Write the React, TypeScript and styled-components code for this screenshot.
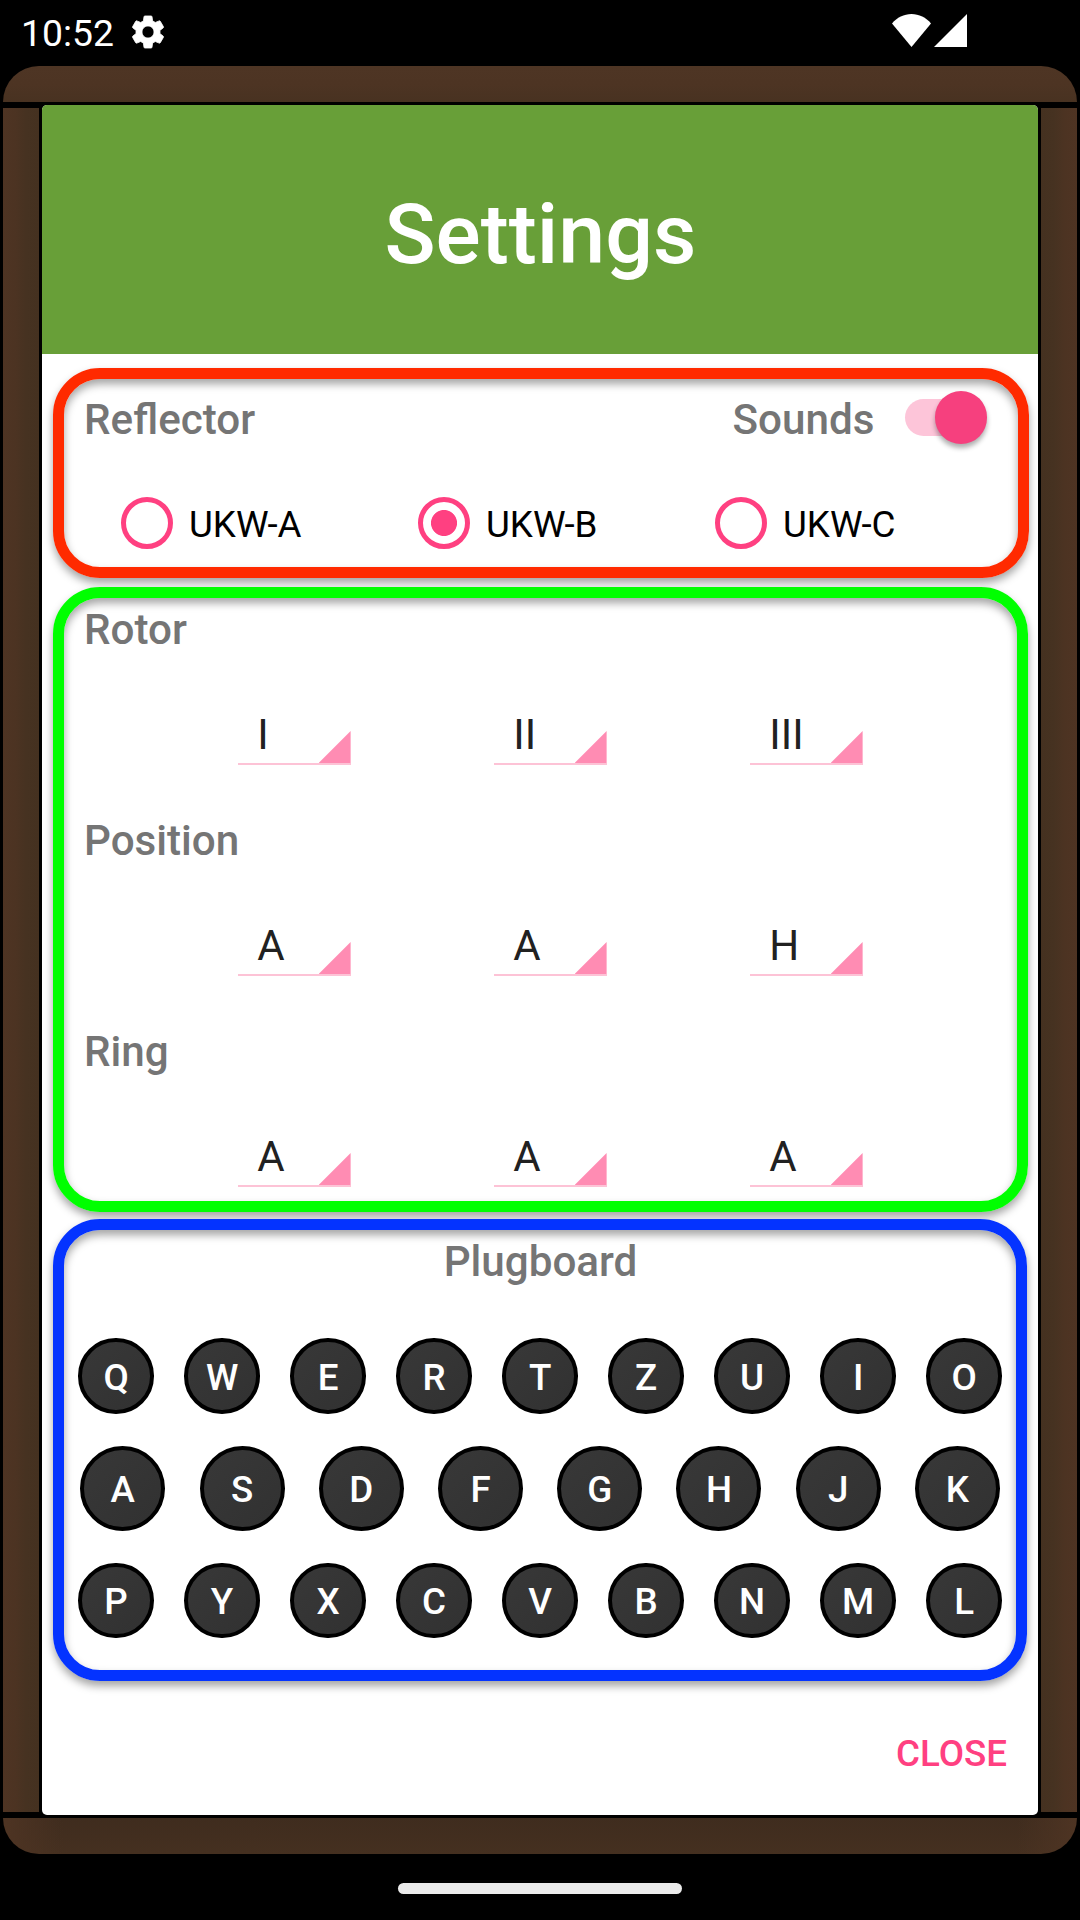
import React, { useState } from "react";
import styled, { createGlobalStyle } from "styled-components";

const GlobalStyle = createGlobalStyle`
  html, body { margin: 0; padding: 0; background: #000; }
  *, *::before, *::after { box-sizing: border-box; }
  button { font: inherit; border: 0; padding: 0; background: none; }
`;

const Screen = styled.div`
  display: flex;
  flex-direction: column;
  width: 1080px;
  height: 1920px;
  overflow: hidden;
  background: #000;
  font-family: Roboto, "Noto Sans", sans-serif;
`;

const StatusBar = styled.header`
  display: flex;
  align-items: flex-start;
  justify-content: space-between;
  height: 66px;
  padding: 0 113px 0 21px;
  color: #fff;
`;

const StatusGroup = styled.div<{ $gap: number; $top: number }>`
  display: flex;
  align-items: flex-start;
  gap: ${(p) => p.$gap}px;
  padding-top: ${(p) => p.$top}px;
  svg { display: block; fill: #fff; }
`;

const Clock = styled.span`
  width: 93px;
  font-size: 37.3px;
  line-height: 41px;
`;

const Gear = styled.svg`
  margin-top: -1px;
  stroke: #fff;
  stroke-width: 0.5;
`;

const Cabinet = styled.div`
  display: flex;
  flex-direction: column;
  height: 1788px;
  padding: 0 3px;
`;

const Rail = styled.div<{ $bottom?: boolean }>`
  height: 36px;
  flex: none;
  border-radius: ${(p) => (p.$bottom ? "0 0 38px 38px" : "38px 38px 0 0")};
  background: ${(p) =>
    p.$bottom
      ? "linear-gradient(90deg, #4e3423 0, rgba(78,52,35,0) 60px, rgba(78,52,35,0) 1014px, #4e3423 1074px), linear-gradient(#3f2c1e, #453020)"
      : "linear-gradient(#4e3524 0, #4d3423 50%, #483221 100%)"};
`;

const Middle = styled.div`
  display: flex;
  flex: 1;
  margin: 3px 0;
`;

const Post = styled.div<{ $right?: boolean }>`
  width: 36px;
  margin: 3px 0;
  background: linear-gradient(${(p) => (p.$right ? 270 : 90)}deg, #4f3423 0, #4c3322 35%, #463221 65%, #453120 100%);
`;

const Dialog = styled.main`
  display: flex;
  flex-direction: column;
  flex: 1;
  margin: 0 3px;
  border-radius: 5px;
  overflow: hidden;
  background: #fff;
`;

const Banner = styled.div`
  display: flex;
  align-items: center;
  justify-content: center;
  height: 249px;
  padding: 10px 0 0 1px;
  background: #689f38;
`;

const BannerTitle = styled.h1`
  margin: 0;
  color: #fff;
  font-size: 84.3px;
  font-weight: 500;
  line-height: 100px;
`;

const Panels = styled.div`
  display: flex;
  flex-direction: column;
  padding: 14px 9px 0 11px;
`;

const Panel = styled.section<{ $color: string; $height: number; $gap: number; $inset: number }>`
  display: flex;
  flex-direction: column;
  height: ${(p) => p.$height}px;
  margin: 0 ${(p) => p.$inset}px ${(p) => p.$gap}px 0;
  border: 11px solid ${(p) => p.$color};
  border-radius: 47px;
  box-shadow: 0 5px 8px rgba(0, 0, 0, 0.36), inset 0 5px 8px rgba(0, 0, 0, 0.36);
`;

const TitleRow = styled.div`
  display: flex;
  justify-content: space-between;
  padding: 16px 31px 0 20px;
`;

const Label = styled.h2`
  margin: 0;
  color: #757575;
  font-size: 42.2px;
  font-weight: 500;
  line-height: 50px;
`;

const SwitchField = styled.label`
  display: flex;
  gap: 30.5px;
`;

const Track = styled.span`
  display: flex;
  justify-content: flex-end;
  align-items: center;
  width: 71px;
  height: 37px;
  margin: 4px 11px 0 0;
  border-radius: 19px;
  background: #fdc5d9;
`;

const Thumb = styled.span`
  flex: none;
  width: 52.5px;
  height: 52.5px;
  margin-right: -11px;
  border-radius: 50%;
  background: #f6407e;
  box-shadow: 0 4px 5px rgba(0, 0, 0, 0.32);
`;

const RadioRow = styled.div`
  display: grid;
  grid-template-columns: repeat(3, 297px);
  padding: 52px 0 0 57px;
`;

const RadioOption = styled.button`
  display: flex;
  align-items: center;
  gap: 16px;
  height: 52px;
  color: #000;
  font-size: 36.75px;
  line-height: 44px;
`;

const RadioText = styled.span`
  padding-top: 4px;
`;

const Ring = styled.span<{ $on: boolean }>`
  width: 52px;
  height: 52px;
  border: 5px solid #ff4081;
  border-radius: 50%;
  background: ${(p) => (p.$on ? "radial-gradient(circle, #ff4081 12.6px, transparent 13.4px)" : "none")};
`;

const RotorGroup = styled.div`
  flex: none;
  height: 211px;
  padding: 7px 0 0 20px;
`;

const SpinnerRow = styled.div`
  display: grid;
  grid-template-columns: repeat(3, 256px);
  padding: 53px 0 0 154px;
`;

const Spinner = styled.button`
  display: flex;
  justify-content: space-between;
  align-items: flex-end;
  width: 112.6px;
  height: 57px;
  padding-left: 19.3px;
  border-bottom: 2px solid #fdc3d6;
  color: #212121;
  font-size: 42px;
  line-height: 56px;
`;

const Corner = styled.i`
  width: 32px;
  height: 32px;
  background: #ff8cb3;
  clip-path: polygon(100% 0, 100% 100%, 0 100%);
`;

const PlugTitle = styled(Label)`
  padding: 7px 0 0 1px;
  text-align: center;
`;

const Keyboard = styled.div`
  display: flex;
  flex-direction: column;
  gap: 32px;
  padding: 51.3px 14px 0 14.3px;
`;

const KeyRow = styled.div<{ $wide?: boolean }>`
  display: flex;
  justify-content: space-between;
  padding: 0 ${(p) => (p.$wide ? 2 : 0)}px;
`;

const Key = styled.button<{ $size: number }>`
  width: ${(p) => p.$size}px;
  height: ${(p) => p.$size}px;
  padding-top: 3.5px;
  border: 4px solid #000;
  border-radius: 50%;
  background: linear-gradient(135deg, #383838, #313131);
  color: #fff;
  font-size: 36.75px;
  font-weight: 500;
  line-height: 40px;
`;

const Actions = styled.div`
  display: flex;
  justify-content: flex-end;
  padding: 51px 31px 0;
`;

const CloseButton = styled.button`
  color: #ff4081;
  font-size: 36.75px;
  font-weight: 500;
  line-height: 44px;
`;

const NavBar = styled.footer`
  display: flex;
  justify-content: center;
  padding-top: 29px;
`;

const Pill = styled.div`
  width: 284px;
  height: 11px;
  border-radius: 6px;
  background: #ebebeb;
`;

const reflectors = ["UKW-A", "UKW-B", "UKW-C"];
const groups = [
  { name: "Rotor", values: ["I", "II", "III"] },
  { name: "Position", values: ["A", "A", "H"] },
  { name: "Ring", values: ["A", "A", "A"] },
];
const keyRows = [
  { keys: "QWERTZUIO", size: 75.6 },
  { keys: "ASDFGHJK", size: 85 },
  { keys: "PYXCVBNML", size: 75.6 },
];

export default function App() {
  const [reflector, setReflector] = useState("UKW-B");

  return (
    <Screen>
      <GlobalStyle />
      <StatusBar>
        <StatusGroup $gap={14} $top={13}>
          <Clock>10:52</Clock>
          <Gear width="40" height="40" viewBox="0 0 24 24">
            <path d="M19.14 12.94c.04-.3.06-.61.06-.94 0-.32-.02-.64-.07-.94l2.03-1.58c.18-.14.23-.41.12-.61l-1.92-3.32c-.12-.22-.37-.29-.59-.22l-2.39.96c-.5-.38-1.03-.7-1.62-.94l-.36-2.54c-.04-.24-.24-.41-.48-.41h-3.84c-.24 0-.43.17-.47.41l-.36 2.54c-.59.24-1.13.57-1.62.94l-2.39-.96c-.22-.08-.47 0-.59.22L2.74 8.87c-.12.21-.08.47.12.61l2.03 1.58c-.05.3-.09.63-.09.94s.02.64.07.94l-2.03 1.58c-.18.14-.23.41-.12.61l1.92 3.32c.12.22.37.29.59.22l2.39-.96c.5.38 1.03.7 1.62.94l.36 2.54c.05.24.24.41.48.41h3.84c.24 0 .44-.17.47-.41l.36-2.54c.59-.24 1.13-.56 1.62-.94l2.39.96c.22.08.47 0 .59-.22l1.92-3.32c.12-.22.07-.47-.12-.61l-2.01-1.58zM12 15.6c-1.98 0-3.6-1.62-3.6-3.6s1.62-3.6 3.6-3.6 3.6 1.62 3.6 3.6-1.62 3.6-3.6 3.6z" />
          </Gear>
        </StatusGroup>
        <StatusGroup $gap={3.5} $top={14}>
          <svg width="39" height="33" viewBox="0 0 39 33">
            <path d="M0 9.5C5 3.4 12 0 19.5 0S34 3.4 39 9.5L19.5 33Z" />
          </svg>
          <svg width="33" height="33" viewBox="0 0 33 33">
            <path d="M33 0V33H0Z" />
          </svg>
        </StatusGroup>
      </StatusBar>

      <Cabinet>
        <Rail />
        <Middle>
          <Post />
          <Dialog>
            <Banner>
              <BannerTitle>Settings</BannerTitle>
            </Banner>
            <Panels>
              <Panel $color="#ff2a00" $height={210} $gap={9} $inset={0}>
                <TitleRow>
                  <Label>Reflector</Label>
                  <SwitchField>
                    <Label as="span">Sounds</Label>
                    <Track>
                      <Thumb />
                    </Track>
                  </SwitchField>
                </TitleRow>
                <RadioRow>
                  {reflectors.map((name) => (
                    <RadioOption key={name} onClick={() => setReflector(name)}>
                      <Ring $on={name === reflector} />
                      <RadioText>{name}</RadioText>
                    </RadioOption>
                  ))}
                </RadioRow>
              </Panel>

              <Panel $color="#00ff00" $height={625} $gap={7} $inset={1}>
                {groups.map((group) => (
                  <RotorGroup key={group.name}>
                    <Label>{group.name}</Label>
                    <SpinnerRow>
                      {group.values.map((value, i) => (
                        <Spinner key={i}>
                          {value}
                          <Corner />
                        </Spinner>
                      ))}
                    </SpinnerRow>
                  </RotorGroup>
                ))}
              </Panel>

              <Panel $color="#0433ff" $height={462} $gap={0} $inset={2}>
                <PlugTitle>Plugboard</PlugTitle>
                <Keyboard>
                  {keyRows.map((row) => (
                    <KeyRow key={row.keys} $wide={row.size > 80}>
                      {row.keys.split("").map((letter) => (
                        <Key key={letter} $size={row.size}>
                          {letter}
                        </Key>
                      ))}
                    </KeyRow>
                  ))}
                </Keyboard>
              </Panel>
            </Panels>
            <Actions>
              <CloseButton>CLOSE</CloseButton>
            </Actions>
          </Dialog>
          <Post $right />
        </Middle>
        <Rail $bottom />
      </Cabinet>

      <NavBar>
        <Pill />
      </NavBar>
    </Screen>
  );
}
